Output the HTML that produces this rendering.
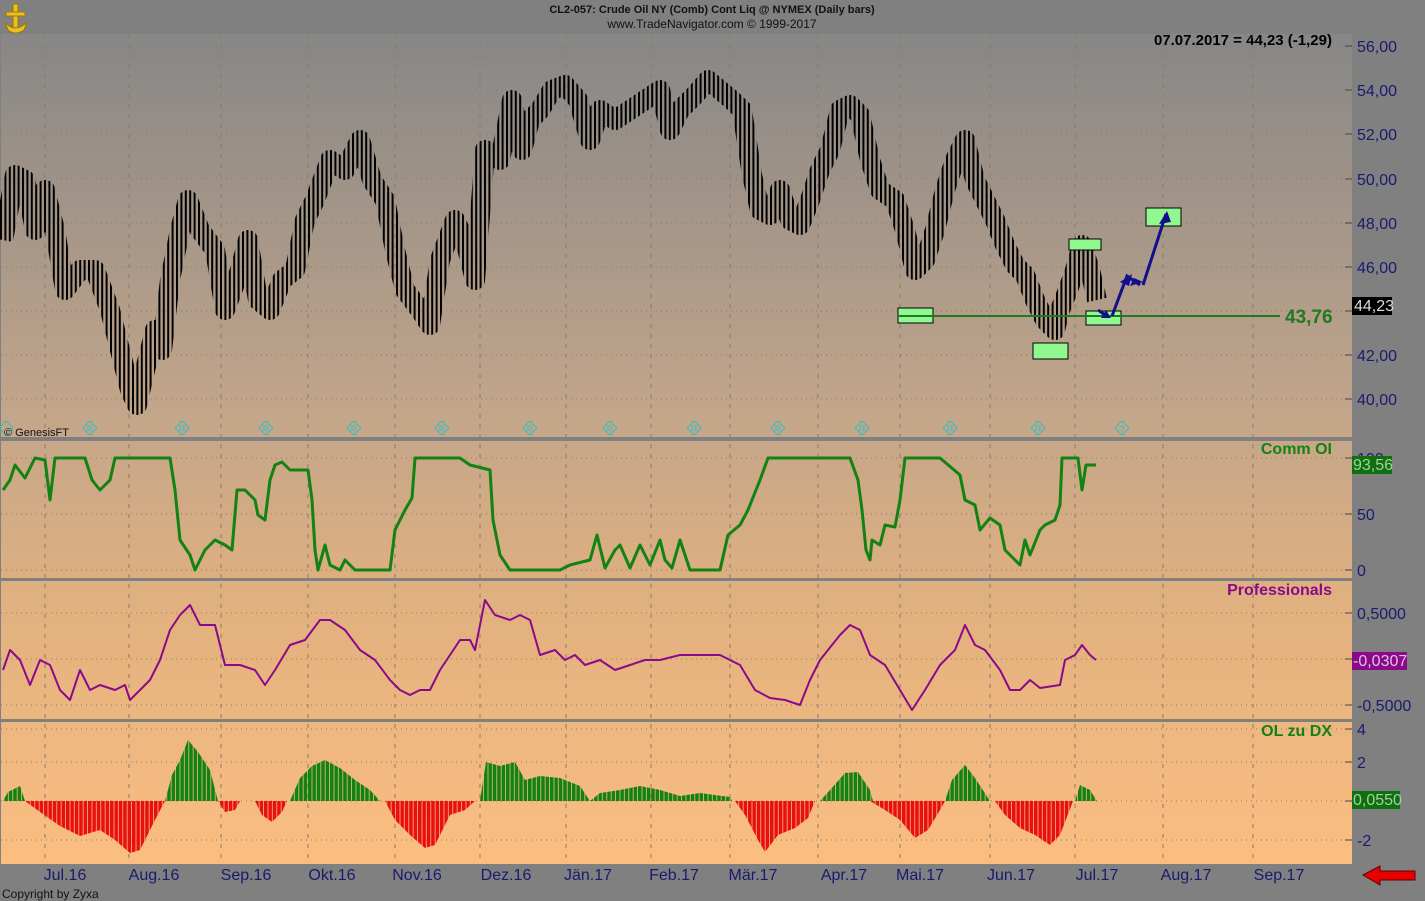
<!DOCTYPE html>
<html><head><meta charset="utf-8"><style>
html,body{margin:0;padding:0;background:#808080;}
body{width:1425px;height:901px;overflow:hidden;position:relative;font-family:"Liberation Sans",sans-serif;}
svg{position:absolute;left:0;top:0;}
</style></head><body>
<svg width="1425" height="901" viewBox="0 0 1425 901" xmlns="http://www.w3.org/2000/svg" font-family="Liberation Sans, sans-serif">
<defs>
<linearGradient id="bg" x1="0" y1="34" x2="0" y2="864" gradientUnits="userSpaceOnUse">
<stop offset="0" stop-color="#878787"/>
<stop offset="0.45" stop-color="#c2a58a"/>
<stop offset="0.7" stop-color="#e2b17f"/>
<stop offset="1" stop-color="#fbbe80"/>
</linearGradient>
<pattern id="bars" x="0" y="0" width="4.4" height="10" patternUnits="userSpaceOnUse">
<rect x="0" y="0" width="2" height="10" fill="#000"/>
</pattern>
<pattern id="gb" x="0" y="0" width="4.4" height="10" patternUnits="userSpaceOnUse">
<rect x="0" y="0" width="3.6" height="10" fill="#128212"/>
</pattern>
<pattern id="rb" x="0" y="0" width="4.4" height="10" patternUnits="userSpaceOnUse">
<rect x="0" y="0" width="3.6" height="10" fill="#e81010"/>
</pattern>
</defs>
<rect x="0" y="0" width="1425" height="901" fill="#808080"/>
<rect x="1" y="34" width="1351" height="830" fill="url(#bg)"/>
<!-- header -->
<text x="712" y="13" font-size="11" font-weight="bold" text-anchor="middle" fill="#111">CL2-057:  Crude Oil NY (Comb) Cont Liq @ NYMEX  (Daily bars)</text>
<text x="712" y="28" font-size="12" text-anchor="middle" fill="#111">www.TradeNavigator.com © 1999-2017</text>
<text x="1332" y="45" font-size="15" font-weight="bold" text-anchor="end" fill="#000">07.07.2017 = 44,23 (-1,29)</text>
<g fill="#e8c020" stroke="#a07800" stroke-width="1"><rect x="13" y="4" width="5" height="24"/><rect x="6" y="12" width="19" height="4"/><path d="M5 22 Q15 34 27 22 L24 30 Q15 36 8 30Z"/></g>
<!-- vertical grid -->
<g stroke="#8a7a6a" stroke-width="1" stroke-dasharray="4,6">
<path d="M45 34V864M129 34V864M221 34V864M308 34V864M395 34V864M480 34V864M566 34V864M651 34V864M730 34V864M818 34V864M900 34V864M990 34V864M1075 34V864M1163 34V864M1253 34V864"/>
</g>
<!-- horizontal grid -->
<g stroke="#8a7a6a" stroke-width="1" stroke-dasharray="1,4">
<path d="M1 46H1345M1 90H1345M1 134H1345M1 179H1345M1 223H1345M1 267H1345M1 311H1345M1 355H1345M1 399H1345M1 458H1345M1 514H1345M1 570H1345M1 613H1345M1 659H1345M1 705H1345M1 729H1345M1 762H1345M1 801H1345M1 840H1345"/>
</g>
<!-- separators -->
<rect x="0" y="437" width="1352" height="4" fill="#808080"/>
<rect x="0" y="578" width="1352" height="3" fill="#808080"/>
<rect x="0" y="719" width="1352" height="3" fill="#808080"/>
<rect x="0" y="34" width="1" height="830" fill="#808080"/>
<!-- price bars -->
<polyline fill="none" stroke="url(#bars)" stroke-width="20" stroke-linejoin="round" points="3,240 15,175 25,180 35,230 45,190 55,230 65,290 80,270 95,270 110,310 120,350 130,390 137,405 145,370 155,330 162,350 170,280 180,230 188,200 200,230 215,250 225,310 240,270 248,240 258,300 270,310 282,280 295,270 305,220 315,200 330,160 345,170 360,140 372,180 385,200 395,250 405,290 420,310 430,325 440,260 455,220 465,240 475,280 485,150 500,160 512,100 522,150 530,120 540,110 552,90 565,85 578,100 590,140 600,110 615,120 630,110 645,100 660,90 670,130 680,110 695,95 708,80 720,90 732,100 742,110 752,175 760,210 770,215 780,190 790,220 800,225 810,200 820,170 830,150 840,110 850,105 860,115 870,160 880,190 895,200 905,230 915,270 925,260 935,230 945,190 955,160 965,140 975,180 985,200 995,220 1005,245 1015,265 1025,275 1035,300 1045,320 1055,330 1060,310 1068,290 1075,270 1082,245 1090,270 1097,300"/>
<!-- support line and boxes -->
<line x1="898" y1="316" x2="1280" y2="316" stroke="#1e7a1e" stroke-width="2"/>
<text x="1285" y="323" font-size="19" font-weight="bold" fill="#1e7a1e">43,76</text>
<g fill="#90f890" stroke="#000" stroke-width="1">
<rect x="898" y="308" width="35" height="15"/><rect x="1033" y="343" width="35" height="16"/><rect x="1069" y="239" width="32" height="11"/><rect x="1086" y="311" width="35" height="14"/><rect x="1146" y="208" width="35" height="18"/>
</g>
<line x1="898" y1="316" x2="1122" y2="316" stroke="#1e7a1e" stroke-width="2"/>
<g stroke="#10108a" stroke-width="3" fill="none"><polyline points="1098,310 1108,317"/><polyline points="1112,316 1127,276 1140,285"/><polyline points="1143,285 1166,214"/></g>
<g fill="#10108a"><path d="M1101,318 L1111,318 L1106,310Z"/><path d="M1120,282 L1132,274 L1129,286Z"/><path d="M1130,286 L1143,282 L1134,278Z"/><path d="M1159,224 L1171,222 L1167,211Z"/></g>
<!-- R diamonds -->
<g fill="none" stroke="#30c0c0" stroke-width="1">
<path d="M6 421l7 7-7 7-7-7zM90 421l7 7-7 7-7-7zM182 421l7 7-7 7-7-7zM266 421l7 7-7 7-7-7zM354 421l7 7-7 7-7-7zM442 421l7 7-7 7-7-7zM530 421l7 7-7 7-7-7zM610 421l7 7-7 7-7-7zM694 421l7 7-7 7-7-7zM778 421l7 7-7 7-7-7zM862 421l7 7-7 7-7-7zM950 421l7 7-7 7-7-7zM1038 421l7 7-7 7-7-7zM1122 421l7 7-7 7-7-7z"/>
</g>
<g font-size="9" fill="#30c0c0" text-anchor="middle"><text x="90" y="432">R</text><text x="182" y="432">R</text><text x="266" y="432">R</text><text x="354" y="432">R</text><text x="442" y="432">R</text><text x="530" y="432">R</text><text x="610" y="432">R</text><text x="694" y="432">R</text><text x="778" y="432">R</text><text x="862" y="432">R</text><text x="950" y="432">R</text><text x="1038" y="432">R</text><text x="1122" y="432">?</text></g>
<text x="4" y="436" font-size="11" fill="#111">© GenesisFT</text>
<!-- Comm OI -->
<polyline fill="none" stroke="#128212" stroke-width="3" stroke-linejoin="round" points="3,490 10,480 15,465 25,478 35,458 45,460 50,500 55,458 85,458 92,480 100,490 110,480 115,458 170,458 175,490 180,540 190,555 195,570 205,550 215,540 225,545 232,550 237,490 245,490 255,500 258,515 265,520 270,480 275,465 282,462 290,470 300,470 308,470 312,500 315,550 318,570 325,545 330,565 340,570 345,560 355,570 390,570 395,530 405,510 412,498 415,458 460,458 470,465 490,470 493,520 500,555 510,570 560,570 570,565 590,560 597,535 605,568 615,550 620,545 630,568 640,545 650,565 660,540 665,560 672,568 680,540 690,570 720,570 728,535 740,525 748,510 760,480 768,458 850,458 858,480 862,510 866,550 870,560 872,540 880,545 885,525 895,527 900,500 905,458 940,458 960,475 965,500 975,505 980,530 990,518 1000,525 1005,550 1015,560 1020,565 1025,540 1030,555 1040,530 1045,525 1055,520 1060,505 1062,458 1078,458 1082,490 1086,465 1096,465"/>
<text x="1332" y="454" font-size="16" font-weight="bold" text-anchor="end" fill="#128212">Comm OI</text>
<!-- Professionals -->
<polyline fill="none" stroke="#8a0a8a" stroke-width="2" stroke-linejoin="round" points="3,670 10,650 20,660 30,685 40,660 50,665 60,690 70,700 80,670 90,690 100,685 115,690 125,685 130,700 140,690 150,680 160,660 170,630 180,615 190,605 200,625 215,625 225,665 240,665 255,670 265,685 275,670 290,645 305,640 320,620 330,620 345,630 360,650 375,660 390,680 400,690 410,695 420,690 430,690 440,670 450,655 460,640 470,640 475,650 485,600 495,615 510,620 520,615 530,620 540,655 555,650 565,660 575,655 585,665 600,660 615,670 630,665 645,660 660,660 680,655 700,655 720,655 740,665 755,690 770,698 785,700 800,705 810,680 820,660 840,635 850,625 860,630 870,655 885,665 900,690 912,710 925,690 940,665 955,650 965,625 975,645 985,650 1000,670 1010,690 1020,690 1030,680 1040,688 1060,685 1065,660 1075,655 1082,645 1090,655 1096,660"/>
<text x="1332" y="595" font-size="16" font-weight="bold" text-anchor="end" fill="#8a0a8a">Professionals</text>
<!-- OL zu DX histogram -->
<g fill="url(#gb)">
<path d="M3,801 L8,792 L20,786 L25,801Z"/>
<path d="M165,801 L172,775 L180,760 L188,740 L198,752 L210,770 L218,801Z"/>
<path d="M290,801 L300,778 L312,766 L325,760 L340,768 L355,780 L370,790 L380,801Z"/>
<path d="M480,801 L486,762 L500,766 L515,762 L525,780 L540,776 L560,778 L580,786 L590,801Z"/>
<path d="M590,801 L600,793 L620,790 L640,786 L660,790 L680,796 L700,793 L730,797 L732,801Z"/>
<path d="M820,801 L830,790 L845,773 L858,772 L870,790 L873,801Z"/>
<path d="M945,801 L952,780 L965,765 L975,778 L990,801Z"/>
<path d="M1075,801 L1080,785 L1090,790 L1097,801Z"/>
</g>
<g fill="url(#rb)">
<path d="M25,801 L40,812 L60,826 L80,836 L100,830 L115,840 L130,853 L140,850 L155,820 L165,801Z"/>
<path d="M218,801 L225,812 L235,810 L240,801Z"/>
<path d="M255,801 L262,815 L272,822 L282,812 L287,801Z"/>
<path d="M385,801 L395,820 L410,835 L425,848 L435,845 L450,815 L465,810 L475,801Z"/>
<path d="M735,801 L745,815 L758,840 L765,852 L778,835 L795,828 L808,818 L815,801Z"/>
<path d="M870,801 L885,810 L900,820 L915,838 L928,830 L940,810 L945,801Z"/>
<path d="M995,801 L1005,815 L1020,828 L1035,835 L1050,845 L1060,835 L1073,801Z"/>
</g>
<text x="1332" y="736" font-size="16" font-weight="bold" text-anchor="end" fill="#128212">OL zu DX</text>
<!-- axis ticks -->
<g stroke="#444" stroke-width="1"><path d="M1345 46H1352M1345 90H1352M1345 134H1352M1345 179H1352M1345 223H1352M1345 267H1352M1345 311H1352M1345 355H1352M1345 399H1352M1345 458H1352M1345 514H1352M1345 570H1352M1345 613H1352M1345 659H1352M1345 705H1352M1345 729H1352M1345 762H1352M1345 801H1352M1345 840H1352"/></g>
<!-- axis labels -->
<g font-size="16" fill="#1a1a70">
<text x="1357" y="52">56,00</text><text x="1357" y="96">54,00</text><text x="1357" y="140">52,00</text><text x="1357" y="185">50,00</text><text x="1357" y="229">48,00</text><text x="1357" y="273">46,00</text><text x="1357" y="361">42,00</text><text x="1357" y="405">40,00</text>
<text x="1357" y="464">100</text><text x="1357" y="520">50</text><text x="1357" y="576">0</text>
<text x="1357" y="619">0,5000</text><text x="1357" y="711">-0,5000</text>
<text x="1357" y="735">4</text><text x="1357" y="768">2</text><text x="1357" y="846">-2</text>
</g>
<rect x="1352" y="297" width="40" height="18" fill="#000"/><text x="1354" y="311" font-size="16" fill="#ddd">44,23</text>
<rect x="1352" y="456" width="40" height="18" fill="#107010"/><text x="1353" y="470" font-size="16" fill="#a0d0a0">93,56</text>
<rect x="1352" y="652" width="55" height="18" fill="#8a0a8a"/><text x="1353" y="666" font-size="16" fill="#e0c0e0">-0,0307</text>
<rect x="1352" y="791" width="48" height="18" fill="#107010"/><text x="1353" y="805" font-size="16" fill="#a0d0a0">0,0550</text>
<!-- month labels -->
<g font-size="16" fill="#1a1a70" text-anchor="middle">
<text x="65" y="880">Jul.16</text><text x="154" y="880">Aug.16</text><text x="246" y="880">Sep.16</text><text x="332" y="880">Okt.16</text><text x="417" y="880">Nov.16</text><text x="506" y="880">Dez.16</text><text x="588" y="880">Jän.17</text><text x="674" y="880">Feb.17</text><text x="753" y="880">Mär.17</text><text x="844" y="880">Apr.17</text><text x="920" y="880">Mai.17</text><text x="1011" y="880">Jun.17</text><text x="1097" y="880">Jul.17</text><text x="1186" y="880">Aug.17</text><text x="1279" y="880">Sep.17</text>
</g>
<path d="M1363 875 L1380 866 L1380 871 L1415 871 L1415 880 L1380 880 L1380 885Z" fill="#e80000" stroke="#600" stroke-width="1"/>
<text x="2" y="898" font-size="12" fill="#111">Copyright by Zyxa</text>
</svg>
</body></html>
